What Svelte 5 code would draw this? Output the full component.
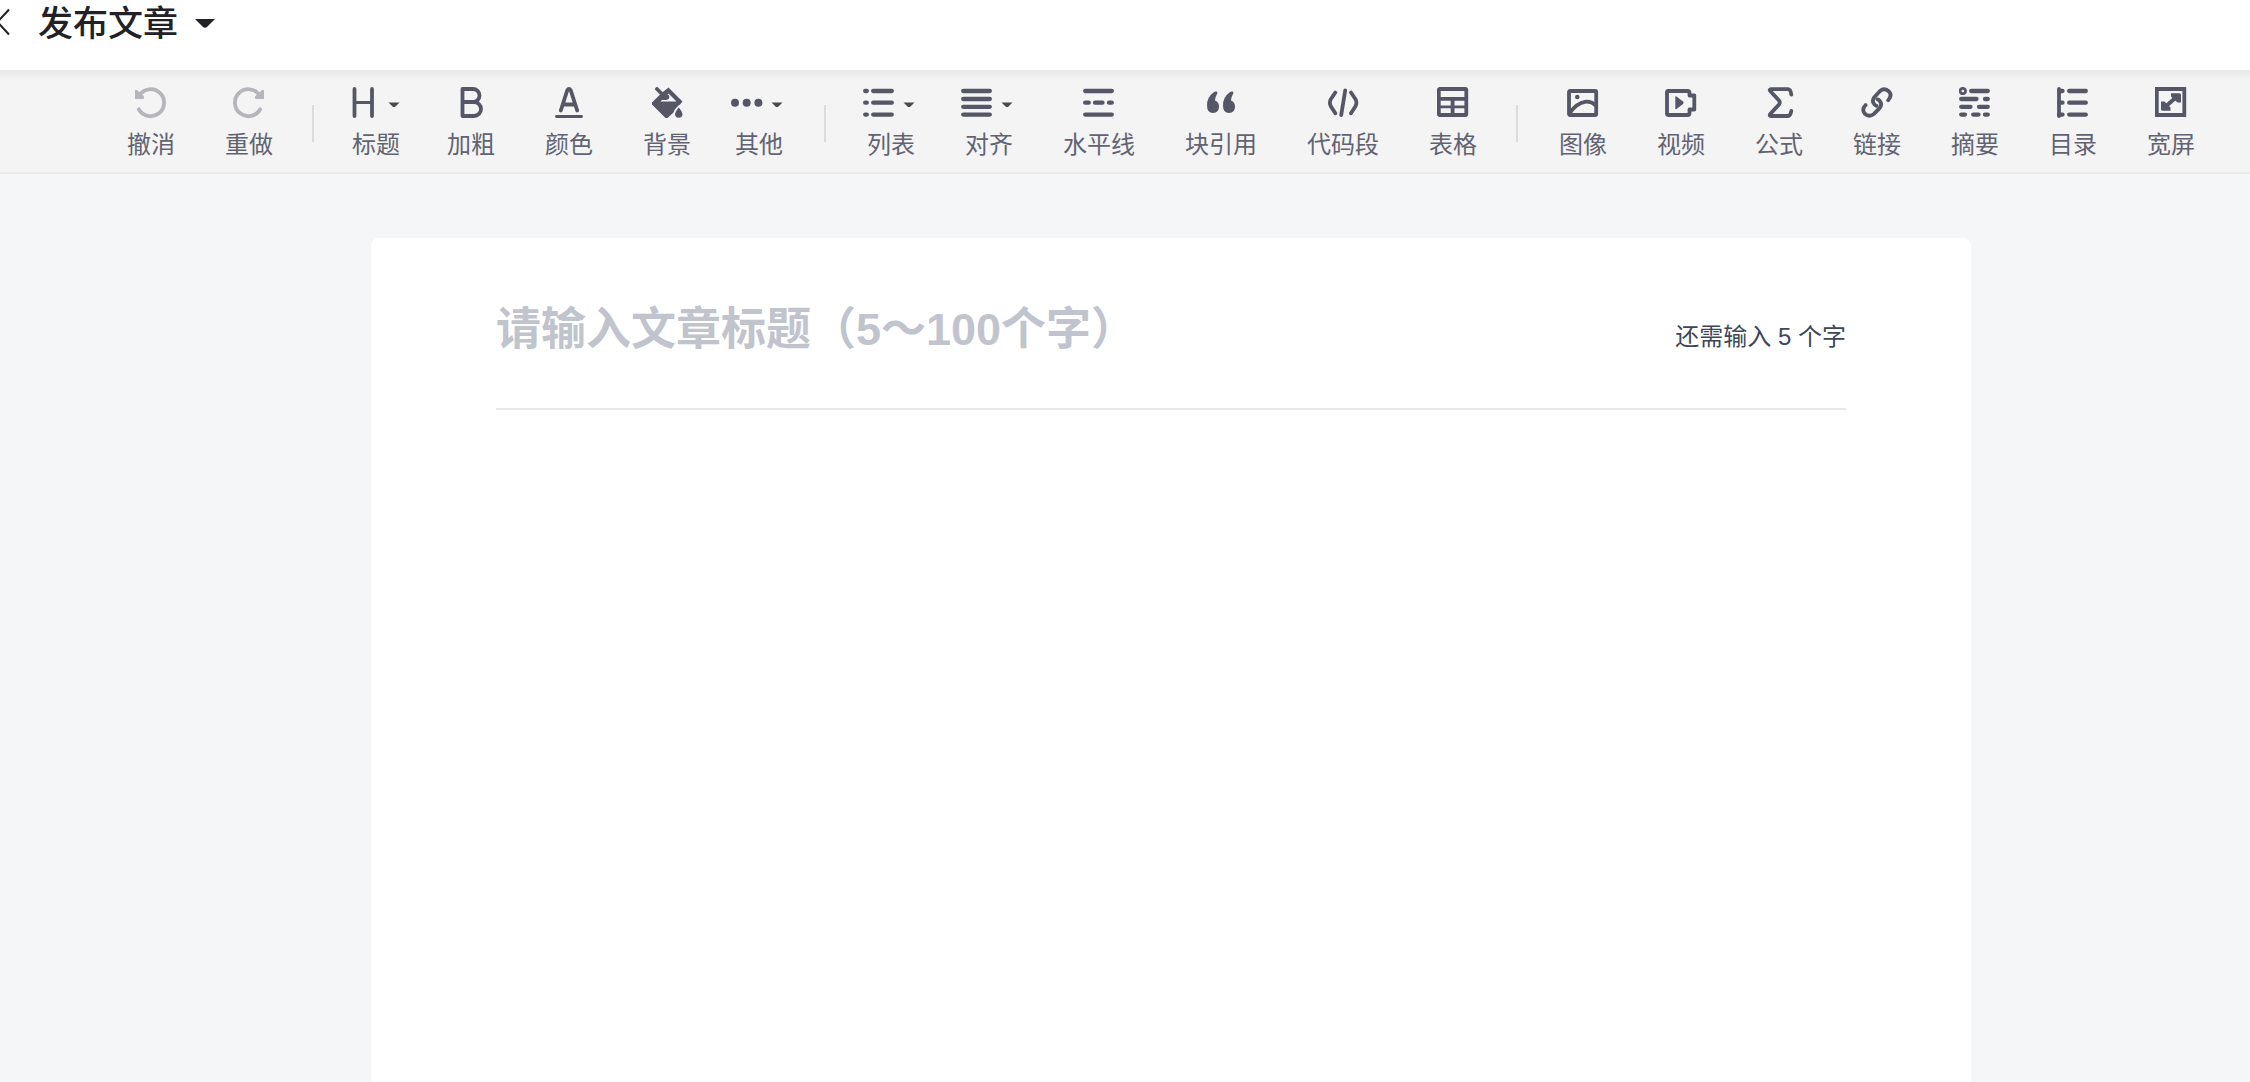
<script lang="ts">
	type Tool = {
		id: string;
		label: string;
		menu?: boolean;
		disabled?: boolean;
	};

	const groups: { name: string; tools: Tool[] }[] = [
		{
			name: 'history',
			tools: [
				{ id: 'undo', label: '撤消', disabled: true },
				{ id: 'redo', label: '重做', disabled: true }
			]
		},
		{
			name: 'text',
			tools: [
				{ id: 'heading', label: '标题', menu: true },
				{ id: 'bold', label: '加粗' },
				{ id: 'color', label: '颜色' },
				{ id: 'background', label: '背景' },
				{ id: 'more', label: '其他', menu: true }
			]
		},
		{
			name: 'block',
			tools: [
				{ id: 'list', label: '列表', menu: true },
				{ id: 'align', label: '对齐', menu: true },
				{ id: 'hr', label: '水平线' },
				{ id: 'quote', label: '块引用' },
				{ id: 'code', label: '代码段' },
				{ id: 'table', label: '表格' }
			]
		},
		{
			name: 'insert',
			tools: [
				{ id: 'image', label: '图像' },
				{ id: 'video', label: '视频' },
				{ id: 'formula', label: '公式' },
				{ id: 'link', label: '链接' },
				{ id: 'summary', label: '摘要' },
				{ id: 'toc', label: '目录' },
				{ id: 'wide', label: '宽屏' }
			]
		}
	];

	const minLength = 5;

	let title = $state('');
	let content = $state('');
	let missing = $derived(Math.max(0, minLength - title.length));
</script>

{#snippet icon(id: string)}
	<svg class="icon" viewBox="0 0 32 32" aria-hidden="true">
		{#if id === 'undo'}
			<path d="M3.8 22.3A13.5 13.5 0 1 0 4.5 8" />
			<path class="solid" d="M0 3.5Q1 2 2.5 3.5L9 9.5Q9.5 12 8 12H0z" />
		{:else if id === 'redo'}
			<path d="M27.2 22.3A13.5 13.5 0 1 1 26.5 8" />
			<path class="solid" d="M31 3.5Q30 2 28.5 3.5L22 9.5Q21.5 12 23 12H31z" />
		{:else if id === 'heading'}
			<path d="M6.5 2v27M24 2v27" />
			<path class="thin" d="M6.5 15.5H24" />
		{:else if id === 'bold'}
			<path d="M7.5 2H18a6.5 6.5 0 0 1 0 13H7.5M18 15h1a7 7 0 0 1 0 14H7.5V2" />
		{:else if id === 'color'}
			<path d="M7.8 23.5L14.2 3.5Q16 .5 17.8 3.5L24.2 23.5M10.5 17.5h11" />
			<path class="thin" d="M3.5 29.5h25" />
		{:else if id === 'background'}
			<path
				class="solid"
				fill-rule="evenodd"
				d="M17.5 .5L31.5 14.5L29 17.5Q27.5 18 26 20Q23 23 22.5 25.5L16.5 31H14.5L1 17.5V15.5L10 6.5zM17.5 6.5L16 8L18 10L15 13L10.8 13L9.5 14.5H25.5z"
			/>
			<path d="M6 2l8.5 8.5" />
			<circle class="solid" cx="15.5" cy="10" r="2.8" />
			<path class="solid" d="M27.8 20.5Q31.5 25 31.5 27.5A3.8 3.8 0 0 1 24 27.5Q24 25 27.8 20.5z" />
		{:else if id === 'more'}
			<circle class="solid" cx="4" cy="15.8" r="4" />
			<circle class="solid" cx="15.7" cy="15.8" r="4" />
			<circle class="solid" cx="27.4" cy="15.8" r="4" />
		{:else if id === 'list'}
			<path class="bar" d="M2.2 4h1.6M2.2 15.7h1.6M2.2 27.6h1.6" />
			<path class="bar" d="M10.2 4H28.8M10.2 15.7H28.8M10.2 27.6H28.8" />
		{:else if id === 'align'}
			<path class="bar" d="M2.2 4H28.8M2.2 12H28.8M2.2 19.8H28.8M2.2 27.6H28.8" />
		{:else if id === 'hr'}
			<path class="bar" d="M2.2 4H28.8M2.2 27.6H28.8" />
			<path class="bar" d="M2.2 15.7h3.6M12 15.7h7.5M26 15.7h2.8" />
		{:else if id === 'quote'}
			<path class="solid" d="M11 4.5Q13.5 4.8 11.5 8Q10 11 10 13.5Q14 15 14 19.5Q14 26 8 26Q2 26 2 18.5Q2 10 8.5 5.5Q10 4.3 11 4.5z" />
			<path class="solid" d="M27 4.5Q29.5 4.8 27.5 8Q26 11 26 13.5Q30 15 30 19.5Q30 26 24 26Q18 26 18 18.5Q18 10 24.5 5.5Q26 4.3 27 4.5z" />
		{:else if id === 'code'}
			<path d="M8.3 5.5L3.8 12.2Q2 15.7 3.8 19.2L8.3 26.3M24 5.5L28.5 12.2Q30.3 15.7 28.5 19.2L24 26.3" />
			<path d="M18.2 3.5L14.2 28" />
		{:else if id === 'table'}
			<rect x="1.8" y="2" width="27.5" height="26" rx="1" />
			<path d="M2 11.8H29M15.6 12V28" />
			<path class="thin" d="M2 19.8H29" />
		{:else if id === 'image'}
			<rect x="2" y="4" width="27.2" height="24" rx="1" />
			<circle class="solid" cx="10.3" cy="10" r="2.3" />
			<path d="M3 25.5Q10 16 18 14.8Q24 14 29 18.5" />
		{:else if id === 'video'}
			<path d="M3 4H22.5Q24.5 4 24.5 6V8.5H29.3V22.5H24.5V26Q24.5 28 22.5 28H3Q2 28 2 27V5Q2 4 3 4z" />
			<path class="solid" d="M10.3 10Q10.3 8.8 11.5 9.5L18 14.5Q19.2 15.7 18 17L11.5 22Q10.3 22.8 10.3 21.5z" />
		{:else if id === 'formula'}
			<path d="M28.3 7.5Q27.5 2.2 25 2.2H8Q6 2.2 7.2 4L16 13.5Q17.5 15.5 16 17.5L7.2 27Q6 29 8 29H25Q27.5 29 28.3 24" />
		{:else if id === 'link'}
			<path d="M27.2 13.2Q31.5 8.5 28 4.5Q23.5 .3 18.8 4.3L13.5 10Q10.2 14 13.5 17.5Q14.6 18.6 15.5 18.8" />
			<path d="M4.6 18Q.3 22.5 3.8 26.7Q8.3 30.9 13 26.9L18.6 21.2Q21.7 17.2 18.6 13.7Q17.4 12.6 16.5 12.4" />
		{:else if id === 'summary'}
			<circle class="thin" cx="3.8" cy="4" r="2.7" />
			<path class="bar" d="M12.2 4H28.8M2.2 12H17.5M26 12H28.8M2.2 19.8H11.5M20 19.8H28.8M2.2 27.6H6M14.2 27.6H19.5M26 27.6H28.8" />
		{:else if id === 'toc'}
			<path d="M2 2V29" />
			<path class="bar" d="M2 4H5.5M2 15.7H5.5M2 27.6H5.5M12.2 4H28.8M12.2 15.7H28.8M12.2 27.6H28.8" />
		{:else if id === 'wide'}
			<path class="miter" d="M1.8 2H29.3V28H1.8z" />
			<path d="M9.5 20.5L22 9.5" />
			<path class="solid" d="M16 6.3H24.5Q26 6.3 26 7.8V15.5H22.5L16 9.5zM6 14.5H9.5L15.5 20.5V23.8H7.5Q6 23.8 6 22.3z" />
		{/if}
	</svg>
{/snippet}

<div class="page">
	<header>
		<button class="back" aria-label="返回">
			<svg viewBox="0 0 14 28" aria-hidden="true"><path d="M13 1.5L1.5 14L13 26.5" /></svg>
		</button>
		<button class="publish">
			发布文章
			<svg viewBox="0 0 20 10" aria-hidden="true"><path d="M0 0H20L12 8Q10 9.5 8 8z" /></svg>
		</button>
	</header>

	<div class="toolbar" role="toolbar" aria-label="编辑工具">
		{#each groups as group, i}
			{#if i > 0}
				<span class="separator"></span>
			{/if}
			<div class="group {group.name}">
				{#each group.tools as tool}
					<button class="tool {tool.id}" class:menu={tool.menu} disabled={tool.disabled}>
						<span class="glyph">
							{@render icon(tool.id)}
							{#if tool.menu}
								<svg class="caret" viewBox="0 0 12 6" aria-hidden="true">
									<path d="M.5 .5H11.5L7.5 4.5Q6 5.5 4.5 4.5z" />
								</svg>
							{/if}
						</span>
						<span class="label">{tool.label}</span>
					</button>
				{/each}
			</div>
		{/each}
	</div>

	<main>
		<article>
			<div class="title-row">
				<input
					type="text"
					aria-label="文章标题"
					placeholder="请输入文章标题（5～100个字）"
					maxlength="100"
					bind:value={title}
				/>
				{#if missing > 0}
					<span class="counter">还需输入 {missing} 个字</span>
				{/if}
			</div>
			<textarea aria-label="正文" bind:value={content}></textarea>
		</article>
	</main>
</div>

<style>
	:global(body) {
		margin: 0;
		background: #f4f6f8;
	}

	.page {
		display: flex;
		flex-direction: column;
		min-height: 100vh;
		font-family: 'Liberation Sans', 'Noto Sans CJK SC', sans-serif;
	}

	button {
		border: none;
		padding: 0;
		background: none;
		font-family: inherit;
		cursor: pointer;
	}

	header {
		display: flex;
		align-items: flex-start;
		gap: 28px;
		height: 70px;
		background: #fff;
	}

	.back {
		margin: 8px 0 0 -4px;
		height: 28px;
	}

	.back svg {
		display: block;
		width: 14px;
		height: 28px;
		fill: none;
		stroke: #222226;
		stroke-width: 2;
	}

	.publish {
		display: flex;
		align-items: center;
		gap: 17px;
		height: 48px;
		color: #222226;
		font-size: 35px;
		font-weight: 500;
		line-height: 48px;
	}

	.publish svg {
		width: 20px;
		height: 10px;
		fill: #222226;
	}

	.toolbar {
		display: flex;
		justify-content: center;
		padding: 17px 0 15px 72px;
		border-bottom: 2px solid #e8eaeb;
		background: linear-gradient(#e8e8e8, #f4f4f4 10px);
	}

	.group {
		display: flex;
	}

	.group.text {
		padding-right: 8px;
	}

	.separator {
		width: 2px;
		height: 37px;
		margin: 18px 16px 0 14px;
		background: #dcdcde;
	}

	.tool {
		display: flex;
		flex-direction: column;
		align-items: center;
		gap: 14px;
		box-sizing: border-box;
		min-width: 98px;
		padding: 0 25px;
		color: #555666;
	}

	.tool.menu {
		padding: 0;
	}

	.tool.heading {
		min-width: 92px;
	}

	.tool.more {
		min-width: 86px;
	}

	.glyph {
		display: flex;
		align-items: center;
		height: 32px;
	}

	.icon {
		width: 32px;
		height: 32px;
		fill: none;
		stroke: currentColor;
		stroke-width: 3.8;
		stroke-linecap: round;
		stroke-linejoin: round;
	}

	.icon .solid {
		fill: currentColor;
		stroke: none;
	}

	.icon .thin {
		stroke-width: 2.8;
	}

	.icon .bar {
		stroke-width: 4.3;
	}

	.icon .miter {
		stroke-linejoin: miter;
	}

	.tool:disabled .icon {
		color: #b5b5bb;
	}

	.caret {
		width: 12px;
		height: 6px;
		margin: 3px 4px 0 8px;
		fill: #4a4a4a;
	}

	.label {
		color: #626372;
		font-size: 24px;
		font-weight: 400;
		line-height: 24px;
		white-space: nowrap;
	}

	main {
		display: flex;
		flex: 1;
		justify-content: center;
		padding: 64px 0 0 92px;
	}

	article {
		display: flex;
		flex-direction: column;
		box-sizing: border-box;
		width: 100%;
		max-width: 1600px;
		padding: 0 125px;
		border-radius: 8px 8px 0 0;
		background: #fff;
	}

	.title-row {
		display: flex;
		align-items: center;
		height: 170px;
		border-bottom: 2px solid #e8e8e8;
	}

	input {
		flex: 1;
		min-width: 0;
		height: 60px;
		margin-top: 14px;
		padding: 0;
		border: none;
		outline: none;
		background: none;
		color: #222226;
		font-family: inherit;
		font-size: 45px;
		font-weight: 600;
	}

	input::placeholder {
		color: #c1c4cc;
		opacity: 1;
	}

	.counter {
		margin-top: 28px;
		color: #3d4757;
		font-size: 24px;
		line-height: 24px;
	}

	textarea {
		flex: 1;
		padding: 24px 0;
		border: none;
		outline: none;
		resize: none;
		font-family: inherit;
		font-size: 32px;
	}
</style>
